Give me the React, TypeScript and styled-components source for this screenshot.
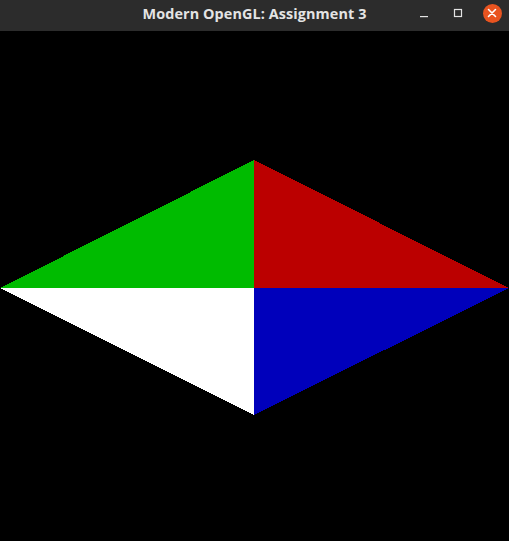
import React from "react";
import styled, { createGlobalStyle } from "styled-components";

const Global = createGlobalStyle`
  html, body { margin: 0; padding: 0; background: #000; }
  body { width: 509px; height: 541px; overflow: hidden; }
`;

const Window = styled.div`
  width: 509px;
  height: 541px;
  display: flex;
  flex-direction: column;
  background: #000;
`;

const TitleBar = styled.div`
  height: 31px;
  flex: 0 0 31px;
  background: #2c2c2c;
  display: grid;
  grid-template-columns: 1fr auto 1fr;
  align-items: center;
  box-sizing: border-box;
`;

const Title = styled.div`
  grid-column: 2;
  font-family: "Open Sans", "DejaVu Sans", sans-serif;
  font-weight: 700;
  font-size: 14.4px;
  color: #e4e4e4;
  letter-spacing: 0.1px;
  margin-top: -4px;
  white-space: nowrap;
`;

const Controls = styled.div`
  grid-column: 3;
  justify-self: end;
  display: flex;
  align-items: center;
  gap: 10px;
  margin-top: -5px;
  padding-right: 5px;
`;

const CtrlButton = styled.div`
  width: 24px;
  height: 20px;
  display: flex;
  align-items: center;
  justify-content: center;
`;

const CloseCircle = styled.div`
  width: 19px;
  height: 19px;
  border-radius: 50%;
  background: #e95420;
  display: flex;
  align-items: center;
  justify-content: center;
`;

const Canvas = styled.div`
  flex: 1;
  background: #000;
`;

export default function App() {
  return (
    <>
      <Global />
      <Window>
        <TitleBar>
          <Title>Modern OpenGL: Assignment 3</Title>
          <Controls>
            <CtrlButton>
              <svg width="10" height="10" viewBox="0 0 10 10">
                <rect x="1" y="8" width="8" height="1.2" fill="#e4e4e4" />
              </svg>
            </CtrlButton>
            <CtrlButton>
              <svg width="10" height="10" viewBox="0 0 10 10">
                <rect x="1.5" y="1.5" width="7" height="7" fill="none" stroke="#e4e4e4" strokeWidth="1.2" />
              </svg>
            </CtrlButton>
            <CtrlButton>
              <CloseCircle>
                <svg width="10" height="10" viewBox="0 0 10 10">
                  <path d="M1.5 1.5 L8.5 8.5 M8.5 1.5 L1.5 8.5" stroke="#fff" strokeWidth="1.6" strokeLinecap="round" />
                </svg>
              </CloseCircle>
            </CtrlButton>
          </Controls>
        </TitleBar>
        <Canvas>
          <svg width="509" height="510" viewBox="0 0 509 510" style={{ display: "block" }} shapeRendering="crispEdges">
            <polygon points="254,129 254,257 0,257" fill="#00bb00" />
            <polygon points="254,129 509,257 254,257" fill="#bb0000" />
            <polygon points="0,257 254,257 254,384" fill="#ffffff" />
            <polygon points="254,257 509,257 254,384" fill="#0000bb" />
          </svg>
        </Canvas>
      </Window>
    </>
  );
}
